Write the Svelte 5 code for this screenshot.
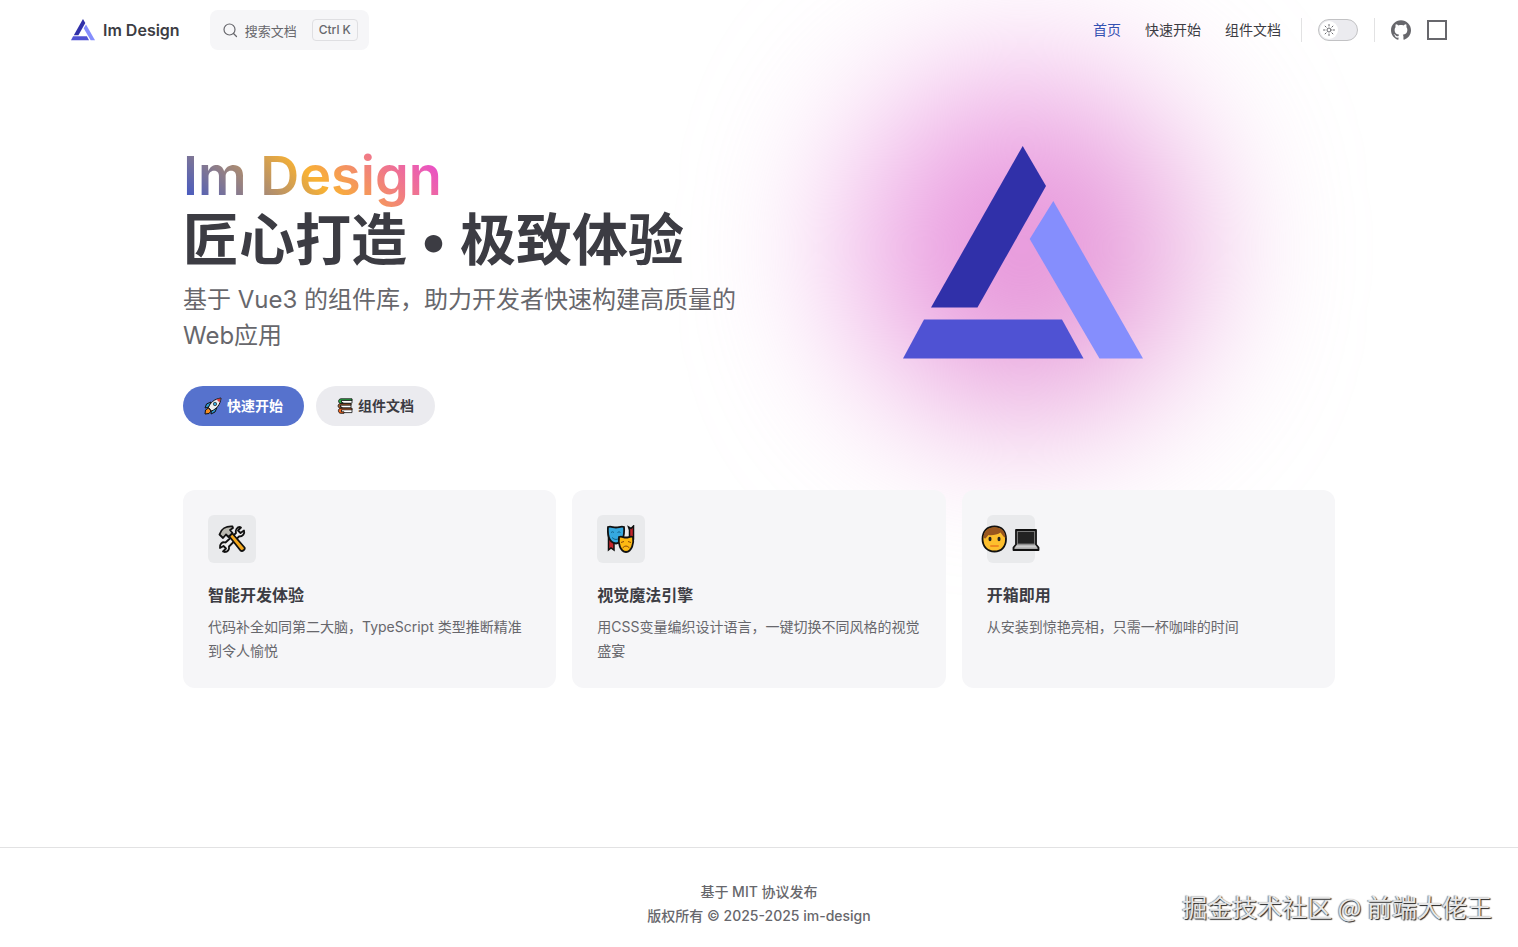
<script lang="ts">
  let dark = $state(false);

  const navLinks = [
    { text: '首页', href: '#home', active: true },
    { text: '快速开始', href: '#start', active: false },
    { text: '组件文档', href: '#components', active: false }
  ];

  const features = [
    {
      icon: 'tools',
      title: '智能开发体验',
      details: '代码补全如同第二大脑，TypeScript 类型推断精准到令人愉悦'
    },
    {
      icon: 'masks',
      title: '视觉魔法引擎',
      details: '用CSS变量编织设计语言，一键切换不同风格的视觉盛宴'
    },
    {
      icon: 'coder',
      title: '开箱即用',
      details: '从安装到惊艳亮相，只需一杯咖啡的时间'
    }
  ];
</script>

{#snippet logo()}
  <svg class="logo" viewBox="0 0 240 213" aria-hidden="true">
    <path fill="#3030a9" d="M119.7 0 143 40 74.5 161.5H28z" />
    <path fill="#4f52d3" d="M21 173.5h138l21.5 39H0z" />
    <path fill="#858efd" d="m150.3 55 89.7 157.5h-43.5L126.7 93z" />
  </svg>
{/snippet}

{#snippet tools()}
  <svg width="28" height="28" viewBox="0 0 28 28" aria-hidden="true">
    <g stroke="#111" stroke-width="1.8" stroke-linejoin="round" stroke-linecap="round">
      <path
        fill="#eee"
        d="M18 8c-1-3 1-6 4-6l1 .5-3 3 2.5 2.5 3.5-2.5c1 3-1 6-5 6l-10 10c.5 3-1 5.5-4.5 5.5l-1.5-.5 3-3-2.5-2.5-3.5 2c-.5-4 2-6.500 5.500-5.500z"
      />
      <path fill="#f4a81c" d="m11 11 3-3 12.500 14.500c1 2-2 4.500-4 3z" />
      <path fill="#b9b8b0" d="M1.500 9.500C3 4 8 1 14.500 1.500l.5 1.500-3 2 2.500 3L10.500 12 8 9.500l-3 3.500z" />
    </g>
  </svg>
{/snippet}

{#snippet masks()}
  <svg width="28" height="28" viewBox="0 0 28 28" aria-hidden="true">
    <path fill="#c4242b" stroke="#111" stroke-width="1.5" d="M1.500 8v17l2.500-2 3 2V13zM26.500 1v13h-4V5l-1-3 2.500 1.500z" />
    <path
      fill="#35a9e0"
      stroke="#111"
      stroke-width="1.8"
      d="M1 2c3-1 5 .5 8 .5S14 1 17 2c.5 6 0 16-8 16.500C1 18 .5 8 1 2z"
    />
    <path d="M4 7.500q1.500-1.500 3 0M10.500 7.500q1.500-1.500 3 0M5 12.500q4 4 8 0" fill="none" stroke="#14658f" stroke-width="1" />
    <path
      fill="#fdb913"
      stroke="#111"
      stroke-width="1.8"
      d="M12 12c3-1 4 .5 7 .5s4-1.500 7-.5c1 6-1 14.500-7 15-6-.5-8-9-7-15z"
    />
    <path d="m14 17.500 3-1m4 0 3 1M15.500 23q3.500-4 7 0" fill="none" stroke="#8a4a08" stroke-width="1" />
  </svg>
{/snippet}

{#snippet coder()}
  <svg width="60" height="28" viewBox="0 0 60 28" aria-hidden="true">
    <path
      fill="#fdbf2d"
      stroke="#111"
      stroke-width="1.8"
      d="M13.500 1.500c7.500 0 11.500 5 11.500 12.500s-4.500 12.500-11.500 12.500S1.500 21.500 1.500 14 6 1.500 13.500 1.500z"
    />
    <path fill="#99561f" d="M2.500 13C2.500 6 7 2.300 13.500 2.300S24.500 6 24.500 13l-2-1.500-3-4c-3 2.500-9 3-12 2.500L4.500 13.500z" />
    <ellipse cx="9" cy="14" rx="1.500" ry="2.200" fill="#222" />
    <ellipse cx="18" cy="14" rx="1.500" ry="2.200" fill="#222" />
    <path d="M10 21h7" fill="none" stroke="#ee8a20" stroke-width="2" stroke-linecap="round" />
    <path fill="#aaa" stroke="#111" stroke-width="1.8" stroke-linejoin="round" d="M35 5h20v14.500l2.500 3V25h-25v-2.500l2.500-3z" />
    <path fill="#222" stroke="#777" stroke-width="1" d="M36.500 6.500h17V19h-17z" />
    <path fill="#ccc" d="M35.500 20.500h19l1.500 2H34z" />
  </svg>
{/snippet}

{#snippet rocket()}
  <svg width="18" height="18" viewBox="0 0 18 18" aria-hidden="true">
    <g stroke="#111" stroke-linejoin="round">
      <path fill="#2c9bd6" d="M7 5 2.500 7 1 11l4-1zM13 10.500l-2 4.500-4 2 .5-4.500z" />
      <path fill="#eee" d="M4.500 10.500C6 6 10 2 17 1c-.5 6.500-4.500 11-9.500 13z" />
      <path fill="#e23838" stroke="none" d="M12.500 2.500 16.500 1.500l-1 4z" />
      <path fill="#f58b1f" d="m4.500 11 2.500 3-2 2.500-4 .5.500-4z" />
    </g>
    <circle cx="11" cy="7" r="1.700" fill="#37a6dc" stroke="#222" stroke-width=".7" />
  </svg>
{/snippet}

{#snippet books()}
  <svg width="16" height="16" viewBox="0 0 16 16" aria-hidden="true">
    <g fill="#fff" stroke="#111" stroke-width=".8">
      <path d="M4 1.400h11v3.800H4z" />
      <path d="M3 6h11v3.800H3z" />
      <path d="M4 10.600h11v4H4z" />
    </g>
    <path fill="#27a844" stroke="#111" stroke-width=".8" d="M15 .8H4C.8.8.8 5.600 4 5.600h2V4.500H4.500v-2H15z" />
    <path fill="#a05a2c" stroke="#111" stroke-width=".8" d="M14 5.600H3.500C.3 5.600.3 10.200 3.500 10.200H5V9H3.500V7.200H14z" />
    <path fill="#f0641e" stroke="#111" stroke-width=".8" d="M15 10.200H4C.5 10.200.5 15.300 4 15.300h3v-1.500H4.500v-2H15z" />
  </svg>
{/snippet}

<div class="layout">
  <header class="nav">
    <div class="nav-inner">
      <a class="brand" href="#home">
        {@render logo()}
        <span>Im Design</span>
      </a>

      <button class="search" type="button">
        <svg width="16" height="16" viewBox="0 0 16 16" fill="none" stroke="currentColor" stroke-width="1.2" aria-hidden="true">
          <circle cx="7.500" cy="7.500" r="5.500" />
          <path d="m11.500 11.500 3 3" stroke-linecap="round" />
        </svg>
        <span class="search-text">搜索文档</span>
        <kbd>Ctrl K</kbd>
      </button>

      <nav class="menu">
        {#each navLinks as link}
          <a href={link.href} class:active={link.active}>{link.text}</a>
        {/each}
      </nav>

      <div class="group">
        <button
          class="switch"
          class:on={dark}
          type="button"
          role="switch"
          aria-checked={dark}
          aria-label="切换主题"
          onclick={() => (dark = !dark)}
        >
          <span class="thumb">
            <svg width="12" height="12" viewBox="0 0 24 24" fill="none" stroke="currentColor" stroke-width="2" stroke-linecap="round">
              <circle cx="12" cy="12" r="4" />
              <path d="M12 1v3M12 20v3M1 12h3M20 12h3M4.200 4.200l2 2M17.800 17.800l2 2M4.200 19.800l2-2M17.800 6.200l2-2" />
            </svg>
          </span>
        </button>
      </div>

      <div class="group social">
        <a href="#github" aria-label="GitHub">
          <svg width="20" height="20" viewBox="0 0 24 24" fill="currentColor">
            <path
              d="M12 .297c-6.63 0-12 5.373-12 12 0 5.303 3.438 9.8 8.205 11.385.6.113.82-.258.82-.577 0-.285-.01-1.04-.015-2.04-3.338.724-4.042-1.61-4.042-1.61C4.422 18.07 3.633 17.7 3.633 17.7c-1.087-.744.084-.729.084-.729 1.205.084 1.838 1.236 1.838 1.236 1.07 1.835 2.809 1.305 3.495.998.108-.776.417-1.305.76-1.605-2.665-.3-5.466-1.332-5.466-5.93 0-1.31.465-2.38 1.235-3.22-.135-.303-.54-1.523.105-3.176 0 0 1.005-.322 3.3 1.23.96-.267 1.98-.399 3-.405 1.02.006 2.04.138 3 .405 2.28-1.552 3.285-1.23 3.285-1.23.645 1.653.24 2.873.12 3.176.765.84 1.23 1.91 1.23 3.22 0 4.61-2.805 5.625-5.475 5.92.42.36.81 1.096.81 2.22 0 1.606-.015 2.896-.015 3.286 0 .315.21.69.825.57C20.565 22.092 24 17.592 24 12.297c0-6.627-5.373-12-12-12"
            />
          </svg>
        </a>
        <a href="#mirror" aria-label="代码仓库">
          <svg width="20" height="20" viewBox="0 0 20 20" fill="none" stroke="currentColor" stroke-width="2">
            <path d="M1 1h18v18H1z" />
          </svg>
        </a>
      </div>
    </div>
  </header>

  <main>
    <section class="hero">
      <div class="hero-main">
        <h1>
          <span class="name">Im Design</span>
          <span class="text">匠心打造 • 极致体验</span>
        </h1>
        <p class="tagline">基于 Vue3 的组件库，助力开发者快速构建高质量的Web应用</p>
        <div class="actions">
          <a class="btn primary" href="#start">{@render rocket()}快速开始</a>
          <a class="btn alt" href="#components">{@render books()}组件文档</a>
        </div>
      </div>
      <div class="hero-image">
        <div class="glow"></div>
        {@render logo()}
      </div>
    </section>

    <section class="features">
      {#each features as feature}
        <article class="card">
          <div class="icon">
            {#if feature.icon === 'tools'}
              {@render tools()}
            {:else if feature.icon === 'masks'}
              {@render masks()}
            {:else}
              {@render coder()}
            {/if}
          </div>
          <h2>{feature.title}</h2>
          <p>{feature.details}</p>
        </article>
      {/each}
    </section>
  </main>

  <footer>
    <p>基于 MIT 协议发布</p>
    <p>版权所有 © 2025-2025 im-design</p>
  </footer>

  <div class="watermark">掘金技术社区 @ 前端大佬王</div>
</div>

<style>
  :global(body) {
    margin: 0;
    background: #fff;
  }

  .layout {
    position: relative;
    display: flex;
    flex-direction: column;
    min-height: 100vh;
    overflow: hidden;
    font-family: Inter, 'Noto Sans CJK SC', sans-serif;
    font-size: 14px;
    line-height: 24px;
    color: #3c3c43;
  }

  .layout * {
    box-sizing: border-box;
  }

  a {
    color: inherit;
    text-decoration: none;
  }

  h1,
  h2,
  p {
    margin: 0;
  }

  button {
    font-family: inherit;
    cursor: pointer;
  }

  svg {
    display: block;
    flex-shrink: 0;
  }

  /* nav */
  .nav {
    position: relative;
    z-index: 2;
    padding: 0 32px;
  }

  .nav-inner {
    display: flex;
    align-items: center;
    max-width: 1376px;
    height: 60px;
    margin: 0 auto;
  }

  .brand {
    display: flex;
    align-items: center;
    gap: 8px;
    font-size: 16px;
    font-weight: 600;
  }

  .brand .logo {
    width: 24px;
  }

  .search {
    display: flex;
    align-items: center;
    height: 40px;
    margin-left: 30px;
    padding: 0 11px 0 12px;
    border: 0;
    border-radius: 8px;
    background: #f6f6f8;
    color: #67676c;
  }

  .search-text {
    margin: 0 15px 0 7px;
    font-size: 13px;
  }

  kbd {
    padding: 0 6px;
    border: 1px solid #dfdfe2;
    border-radius: 4px;
    font-family: inherit;
    font-size: 12px;
    font-weight: 500;
    line-height: 20px;
  }

  .menu {
    display: flex;
    gap: 24px;
    margin-left: auto;
  }

  .menu .active {
    color: #3451b2;
  }

  .group {
    display: flex;
    align-items: center;
    height: 24px;
    margin-left: 20px;
    padding-left: 16px;
    border-left: 1px solid #e2e2e3;
  }

  .group.social {
    gap: 16px;
    margin-left: 16px;
    color: #67676c;
  }

  .switch {
    display: flex;
    width: 40px;
    height: 22px;
    padding: 1px;
    border: 1px solid #c2c2c4;
    border-radius: 11px;
    background: #ebebef;
    color: #67676c;
  }

  .switch.on {
    justify-content: flex-end;
  }

  .thumb {
    display: flex;
    align-items: center;
    justify-content: center;
    width: 18px;
    height: 18px;
    border-radius: 50%;
    background: #fff;
  }

  /* hero */
  main {
    padding: 84px 64px 64px;
  }

  .hero,
  .features {
    max-width: 1152px;
    margin: 0 auto;
  }

  .hero {
    display: flex;
    align-items: flex-start;
  }

  .hero-main {
    width: 592px;
  }

  h1 {
    display: flex;
    flex-direction: column;
    align-items: flex-start;
    font-size: 56px;
    font-weight: 700;
    line-height: 64px;
  }

  h1 .text {
    white-space: nowrap;
  }

  .name {
    background: linear-gradient(45deg, #3451d1, #f9b233 50%, #e63be6);
    background-clip: text;
    -webkit-background-clip: text;
    color: transparent;
    font-size: 54px;
    font-weight: 600;
  }

  .tagline {
    padding-top: 10px;
    font-size: 24px;
    line-height: 36px;
    color: #67676c;
  }

  .actions {
    display: flex;
    gap: 12px;
    padding-top: 32px;
  }

  .btn {
    display: flex;
    align-items: center;
    gap: 5px;
    height: 40px;
    padding: 0 21px;
    border-radius: 20px;
    font-weight: 700;
  }

  .primary {
    background: #5672cd;
    color: #fff;
  }

  .alt {
    background: #ebebef;
  }

  .hero-image {
    position: relative;
    display: flex;
    flex: 1;
    justify-content: center;
    padding: 2px 64px 0 0;
  }

  .hero-image .logo {
    position: relative;
    width: 240px;
  }

  .glow {
    position: absolute;
    top: -64px;
    left: calc(50% - 200px);
    width: 336px;
    height: 336px;
    border-radius: 50%;
    background: linear-gradient(-45deg, #e495d6 50%, #e996df 50%);
    filter: blur(80px);
  }

  /* features */
  .features {
    position: relative;
    display: grid;
    grid-template-columns: repeat(3, 1fr);
    gap: 16px;
    margin-top: 64px;
  }

  .card {
    padding: 25px;
    border-radius: 12px;
    background: #f6f6f8;
  }

  .icon {
    display: flex;
    align-items: center;
    justify-content: center;
    width: 48px;
    height: 48px;
    margin-bottom: 20px;
    border-radius: 6px;
    background: #e9eaec;
  }

  h2 {
    font-size: 16px;
    font-weight: 600;
    line-height: 24px;
  }

  .card p {
    padding-top: 8px;
    color: #67676c;
  }

  /* footer */
  footer {
    margin-top: auto;
    padding: 32px 24px 19px;
    border-top: 1px solid #e2e2e3;
    color: #67676c;
    font-weight: 500;
    text-align: center;
  }

  .watermark {
    position: absolute;
    right: 26px;
    bottom: 23px;
    font-family: 'Noto Sans CJK SC', sans-serif;
    font-size: 25px;
    line-height: 36px;
    color: #e6e6e6;
    text-shadow: 1px 1px 1px #222, -1px 0 1px #888;
  }
</style>
